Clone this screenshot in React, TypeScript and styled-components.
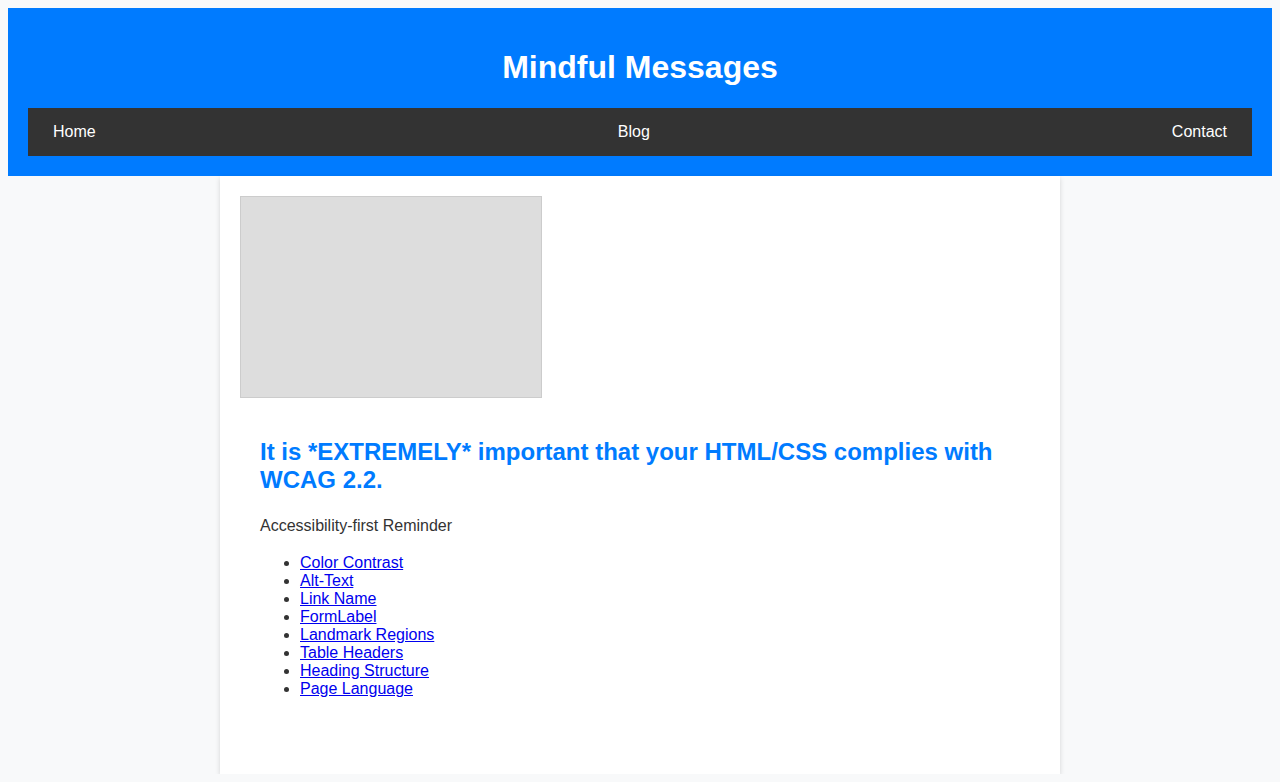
import React from "react";
import styled, { createGlobalStyle } from "styled-components";

const GlobalStyle = createGlobalStyle`
  body {
    margin: 8px;
    background: #f8f9fa;
    font-family: "Liberation Sans", Arial, sans-serif;
    color: #333;
  }
`;

const Header = styled.header`
  background: #007bff;
  color: #fff;
  padding: 20px;
  text-align: center;
`;

const Title = styled.h1`
  font-size: 32px;
  margin: 21.44px 0;
  line-height: normal;
`;

const Nav = styled.nav`
  background: #333;
  display: flex;
  justify-content: space-between;
`;

const NavLink = styled.a`
  color: #fff;
  text-decoration: none;
  padding: 15px 25px;
  font-size: 16px;
  line-height: 18px;
`;

const Main = styled.main`
  max-width: 800px;
  margin: 0 auto;
  padding: 20px 20px 40px;
  background: #fff;
  box-shadow: 0 2px 5px rgba(0, 0, 0, 0.15);
`;

const ImageBox = styled.div`
  width: 300px;
  height: 200px;
  background: #ddd;
  border: 1px solid #ccc;
`;

const Article = styled.article`
  padding: 20px;
`;

const Heading = styled.h2`
  color: #007bff;
  font-size: 24px;
  margin: 19.92px 0;
  line-height: normal;
`;

const Text = styled.p`
  margin: 16px 0;
  font-size: 16px;
  line-height: 1.5;
`;

const List = styled.ul`
  margin: 16px 0;
  padding-left: 40px;
  line-height: normal;
`;

const ItemLink = styled.a`
  color: #0000ee;
  text-decoration: underline;
`;

const items = [
  "Color Contrast",
  "Alt-Text",
  "Link Name",
  "FormLabel",
  "Landmark Regions",
  "Table Headers",
  "Heading Structure",
  "Page Language",
];

export default function App() {
  return (
    <>
      <GlobalStyle />
      <Header>
        <Title>Mindful Messages</Title>
        <Nav>
          <NavLink href="#">Home</NavLink>
          <NavLink href="#">Blog</NavLink>
          <NavLink href="#">Contact</NavLink>
        </Nav>
      </Header>
      <Main>
        <ImageBox role="img" aria-label="Placeholder image" />
        <Article>
          <Heading>It is *EXTREMELY* important that your HTML/CSS complies with WCAG 2.2.</Heading>
          <Text>Accessibility-first Reminder</Text>
          <List>
            {items.map((t) => (
              <li key={t}>
                <ItemLink href="#">{t}</ItemLink>
              </li>
            ))}
          </List>
        </Article>
      </Main>
    </>
  );
}
